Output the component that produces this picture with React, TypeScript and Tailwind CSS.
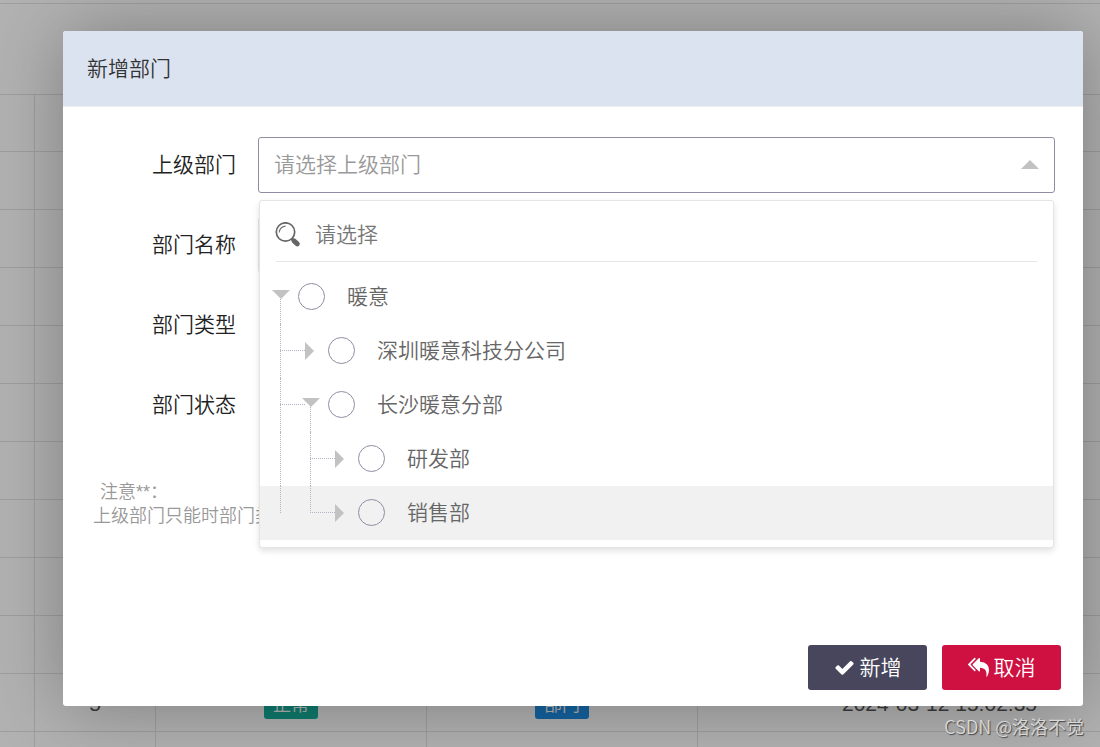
import React from "react";

type NodeRow = {
  id: string;
  label: string;
  open: boolean;
  guides: ("line" | "branch" | "last" | "end")[];
  active?: boolean;
};

const nodes: NodeRow[] = [
  { id: "root", label: "暖意", open: true, guides: [] },
  { id: "sz", label: "深圳暖意科技分公司", open: false, guides: ["branch"] },
  { id: "cs", label: "长沙暖意分部", open: true, guides: ["branch"] },
  { id: "rd", label: "研发部", open: false, guides: ["line", "branch"] },
  { id: "sales", label: "销售部", open: false, guides: ["end", "last"], active: true },
];

const guideLine = {
  line: "h-full",
  branch: "h-full",
  last: "h-[27px]",
  end: "h-[27px]",
};

function TreeRow({ node }: { node: NodeRow }) {
  return (
    <li className={`flex h-[54px] items-center pl-3 ${node.active ? "bg-[#f1f1f1]" : ""}`}>
      {node.guides.map((kind, i) => (
        <span key={i} className="relative h-full w-[30px] shrink-0">
          <span className={`absolute top-0 left-2 border-l border-dotted border-[#b4b4c2] ${guideLine[kind]}`} />
          {(kind === "branch" || kind === "last") && (
            <span className="absolute top-[26px] left-2 w-[25px] border-t border-dotted border-[#b4b4c2]" />
          )}
        </span>
      ))}
      <button
        type="button"
        aria-label={node.open ? "收起" : "展开"}
        aria-expanded={node.open}
        className="relative flex h-full w-[18px] shrink-0 items-center justify-center"
      >
        {node.open && (
          <span className="absolute top-[27px] bottom-0 left-2 border-l border-dotted border-[#b4b4c2]" />
        )}
        <svg viewBox="0 0 18 18" className="relative size-[18px] fill-[#c2c2c2]">
          {node.open ? <path d="M0 2h18l-9 9z" /> : <path d="M3 0v18l9-9z" />}
        </svg>
      </button>
      <input
        id={node.id}
        type="radio"
        name="parent"
        className="mb-px ml-2 size-[27px] shrink-0 appearance-none rounded-full border border-[#8f8da3]"
      />
      <label htmlFor={node.id} className="pl-[22px] text-[21px] leading-8 text-[#666]">
        {node.label}
      </label>
    </li>
  );
}

function DepartmentTable() {
  const cell = "border-r border-b border-[#e2e2e2] p-0";
  const textCell = "border-r border-b border-[#e2e2e2] p-0 pt-0.5";
  return (
    <div className="absolute inset-0 overflow-hidden pt-[3px]">
      <div className="h-[92px] border-y border-[#e2e2e2]" />
      <table className="w-[1182px] table-fixed border-separate border-spacing-0 text-center text-[21px] text-[#555]">
        <colgroup>
          <col className="w-[35px]" />
          <col className="w-[121px]" />
          <col className="w-[271px]" />
          <col className="w-[271px]" />
          <col />
        </colgroup>
        <tbody>
          {Array.from({ length: 11 }, (_, row) => (
            <tr key={row} className={row === 0 ? "h-[57px]" : "h-[58px]"}>
              <td className={cell} />
              <td className={textCell}>{row === 10 && "5"}</td>
              <td className={cell}>
                {row === 10 && (
                  <span className="mt-1 inline-block h-[27px] w-[54px] rounded-[3px] bg-[#16b09c] align-middle text-lg leading-[27px] text-white">
                    正常
                  </span>
                )}
              </td>
              <td className={cell}>
                {row === 10 && (
                  <span className="mt-1 inline-block h-[27px] w-[54px] rounded-[3px] bg-[#1e8fe5] align-middle text-lg leading-[27px] text-white">
                    部门
                  </span>
                )}
              </td>
              <td className={textCell}>{row === 10 && "2024-03-12 15:02:35"}</td>
            </tr>
          ))}
          <tr className="h-[58px]">
            {Array.from({ length: 5 }, (_, col) => (
              <td key={col} className={cell} />
            ))}
          </tr>
        </tbody>
      </table>
    </div>
  );
}

const labelClass = "w-[173px] shrink-0 text-right text-[21px] leading-8 text-[#222]";

export default function App() {
  return (
    <div className="relative min-h-screen overflow-hidden bg-white font-['Liberation_Sans','Noto_Sans_CJK_SC',sans-serif] font-[350]">
      <DepartmentTable />
      <div className="absolute inset-0 bg-black/30" />

      <div className="relative pt-[31px] pr-[17px] pb-[41px] pl-[63px]">
        <section
          role="dialog"
          aria-labelledby="dialog-title"
          className="rounded-[3px] bg-white shadow-[1px_1px_75px_rgba(0,0,0,0.3)]"
        >
          <h1
            id="dialog-title"
            className="flex h-[76px] items-center rounded-t-[3px] border-b border-[#eee] bg-[#dce3f0] px-6 text-[21px] font-[350] text-[#333]"
          >
            新增部门
          </h1>

          <form className="pt-[30px]">
            <div className="flex flex-col gap-6 pr-7">
              <div className="flex items-center">
                <label htmlFor="parent-dept" className={labelClass}>
                  上级部门
                </label>
                <div className="relative z-10 ml-[22px] flex-1">
                  <input
                    id="parent-dept"
                    readOnly
                    placeholder="请选择上级部门"
                    className="block h-14 w-full rounded-[3px] border border-[#8f8da3] bg-white px-[15px] text-[21px] outline-none placeholder:text-[#999]"
                  />
                  <svg viewBox="0 0 18 9" className="absolute top-[23px] right-4 h-[9px] w-[18px] fill-[#c2c2c2]">
                    <path d="M0 9h18L9 0z" />
                  </svg>

                  <div className="absolute top-[63px] right-px left-px rounded-[3px] border border-[#e4e4e4] bg-white pb-[7px] shadow-[0_3px_6px_rgba(0,0,0,0.12)]">
                    <div className="mx-4 mb-2 flex h-[61px] items-center border-b border-[#e6e6e6] pt-2">
                      <svg viewBox="0 0 26 26" className="-ml-px size-[26px] shrink-0" fill="none">
                        <circle cx="10.500" cy="10" r="9.200" stroke="#666" strokeWidth="1.700" />
                        <path d="M4.300 10.500a6.300 6.300 0 0 1 6.300-6.300" stroke="#777" strokeWidth="1.200" />
                        <path d="M16.500 16.500l2 2" stroke="#666" strokeWidth="2.500" />
                        <path d="M19 18.800l3.300 3" stroke="#666" strokeWidth="5" strokeLinecap="round" />
                      </svg>
                      <input
                        type="search"
                        aria-label="搜索部门"
                        placeholder="请选择"
                        className="ml-3.5 min-w-0 flex-1 text-[21px] outline-none placeholder:text-[#777]"
                      />
                    </div>
                    <ul>
                      {nodes.map((n) => (
                        <TreeRow key={n.id} node={n} />
                      ))}
                    </ul>
                  </div>
                </div>
              </div>

              <div className="flex items-center">
                <label htmlFor="dept-name" className={labelClass}>
                  部门名称
                </label>
                <input
                  id="dept-name"
                  className="mr-0.5 ml-[22px] h-14 flex-1 rounded-[3px] border border-[#e6e6e6] px-[15px] text-[21px] outline-none"
                />
              </div>
              <div className="flex h-14 items-center">
                <span className={labelClass}>部门类型</span>
              </div>
              <div className="flex h-14 items-center">
                <span className={labelClass}>部门状态</span>
              </div>
            </div>

            <div className="mt-[47px] pl-[30px] text-lg leading-6 text-[#999]">
              <p className="pl-[7px]">注意**：</p>
              <p>上级部门只能时部门类型</p>
            </div>

            <div className="mt-[117px] flex justify-end gap-[15px] pr-[22px] pb-4">
              <button
                type="button"
                className="flex h-[45px] w-[119px] items-center justify-center gap-[5px] rounded-[3px] bg-[#47465c] text-[21px] text-white"
              >
                <svg viewBox="0 0 1792 1792" className="size-[21px] fill-current">
                  <path d="M1671 566q0 40-28 68l-724 724-136 136q-28 28-68 28t-68-28l-136-136-362-362q-28-28-28-68t28-68l136-136q28-28 68-28t68 28l294 295 656-657q28-28 68-28t68 28l136 136q28 28 28 68z" />
                </svg>
                新增
              </button>
              <button
                type="button"
                className="flex h-[45px] w-[119px] items-center justify-center gap-[5px] rounded-[3px] bg-[#cf1142] text-[21px] text-white"
              >
                <svg viewBox="0 0 1792 1792" className="size-[21px] fill-current">
                  <path d="M640 1082v70q0 42-39 59-13 5-25 5-27 0-45-19l-512-512q-19-19-19-45t19-45l512-512q29-31 70-14 39 17 39 59v69l-397 398q-19 19-19 45t19 45zm1152 58q0 58-17 133.500t-38.500 138-48 125-40.500 90.500l-20 40q-8 17-28 17-6 0-9-1-25-8-23-34 43-400-106-565-64-71-170.500-110.500t-267.500-52.500v251q0 42-39 59-13 5-25 5-27 0-45-19l-512-512q-19-19-19-45t19-45l512-512q29-31 70-14 39 17 39 59v262q411 28 599 221 169 173 169 509z" />
                </svg>
                取消
              </button>
            </div>
          </form>
        </section>
      </div>

      <div className="absolute right-4 bottom-[9px] font-['Noto_Sans_CJK_SC',sans-serif] text-lg leading-6 text-[#d8d8d8] [text-shadow:1px_1px_1px_#444]">
        CSDN @洛洛不觉
      </div>
    </div>
  );
}
